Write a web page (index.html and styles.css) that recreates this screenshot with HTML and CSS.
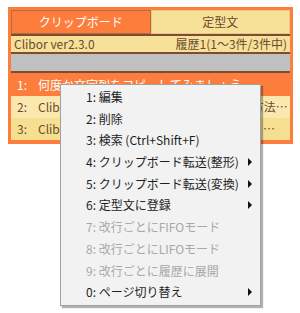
FILE: index.html
```html
<!DOCTYPE html>
<html lang="ja">

<head>
  <meta charset="UTF-8">
  <title>Clibor</title>
  <link rel="stylesheet" href="styles.css">
</head>

<body>
  <div class="clibor">
    <div class="tabs">
      <div class="tab active">クリップボード</div>
      <div class="tab">定型文</div>
    </div>
    <div class="info">
      <span>Clibor ver2.3.0</span>
      <span>履歴1(1～3件/3件中)</span>
    </div>
    <div class="search"></div>
    <div class="list">
      <div class="row selected"><span class="num">1:</span>何度か文字列をコピーしてみましょう</div>
      <div class="row"><span class="num">2:</span>Cliborはクリップボード履歴を管理する方法です</div>
      <div class="row odd"><span class="num">3:</span>Cliborへようこそ！まず使ってみましょう…</div>
    </div>
  </div>

  <!-- right click menu -->
  <div class="menu">
    <div class="menu-item">1: 編集</div>
    <div class="menu-item">2: 削除</div>
    <div class="menu-item">3: 検索 (Ctrl+Shift+F)</div>
    <div class="menu-item sub">4: クリップボード転送(整形)</div>
    <div class="menu-item sub">5: クリップボード転送(変換)</div>
    <div class="menu-item sub">6: 定型文に登録</div>
    <div class="menu-item disabled">7: 改行ごとにFIFOモード</div>
    <div class="menu-item disabled">8: 改行ごとにLIFOモード</div>
    <div class="menu-item disabled">9: 改行ごとに履歴に展開</div>
    <div class="menu-item sub">0: ページ切り替え</div>
  </div>
</body>

</html>
```

FILE: styles.css
```css
html {
  background: white;
}

body {
  margin: 0;
  font-family: "Noto Sans CJK JP", "Noto Sans", sans-serif;
  font-size: 12px;
}

.clibor {
  width: 279px;
  margin: 7px 0 0 8px;
  padding: 3px 3px 4px 3px;
  background: #fd7d3c;
}

.tabs {
  display: flex;
  border-bottom: 2px solid #7d4d33;
}

.tab {
  flex: 1;
  height: 22px;
  line-height: 22px;
  text-align: center;
  background: #f7e199;
  color: #6b4a30;
  border: 1px solid #e8c98a;
}

.tab.active {
  background: #fd7d3c;
  color: white;
  border: 1px solid #b86a3e;
}

.info {
  display: flex;
  justify-content: space-between;
  height: 16px;
  line-height: 16px;
  padding: 0 3px;
  background: #f7e199;
  color: #6b4a30;
  border-bottom: 2px solid #7d4d33;
}

.search {
  height: 17px;
  background: #c0c0c0;
  border-bottom: 2px solid #7d4d33;
}

.list {
  margin-top: 1px;
}

.row {
  height: 22px;
  line-height: 22px;
  padding-left: 6px;
  background: #fbe8ae;
  color: #6b4a30;
  white-space: nowrap;
  overflow: hidden;
  text-overflow: ellipsis;
}

.row.odd {
  background: #f6df91;
}

.row.selected {
  background: #fd7d3c;
  color: white;
}

.num {
  display: inline-block;
  width: 21px;
}

.menu {
  position: absolute;
  left: 60px;
  top: 84px;
  width: 199px;
  padding: 1px 0 2px 0;
  background: #f2f2f2;
  border: 1px solid #a0a0a0;
  box-shadow: 2px 2px 1px rgba(0, 0, 0, 0.3);
}

.menu-item {
  position: relative;
  height: 21.7px;
  line-height: 21.7px;
  padding-left: 25px;
  color: #1e1e1e;
}

.menu-item.disabled {
  color: #a8a8a8;
}

.menu-item.sub::after {
  content: "";
  position: absolute;
  right: 8px;
  top: 7px;
  border-left: 4px solid #111;
  border-top: 4px solid transparent;
  border-bottom: 4px solid transparent;
}
```
